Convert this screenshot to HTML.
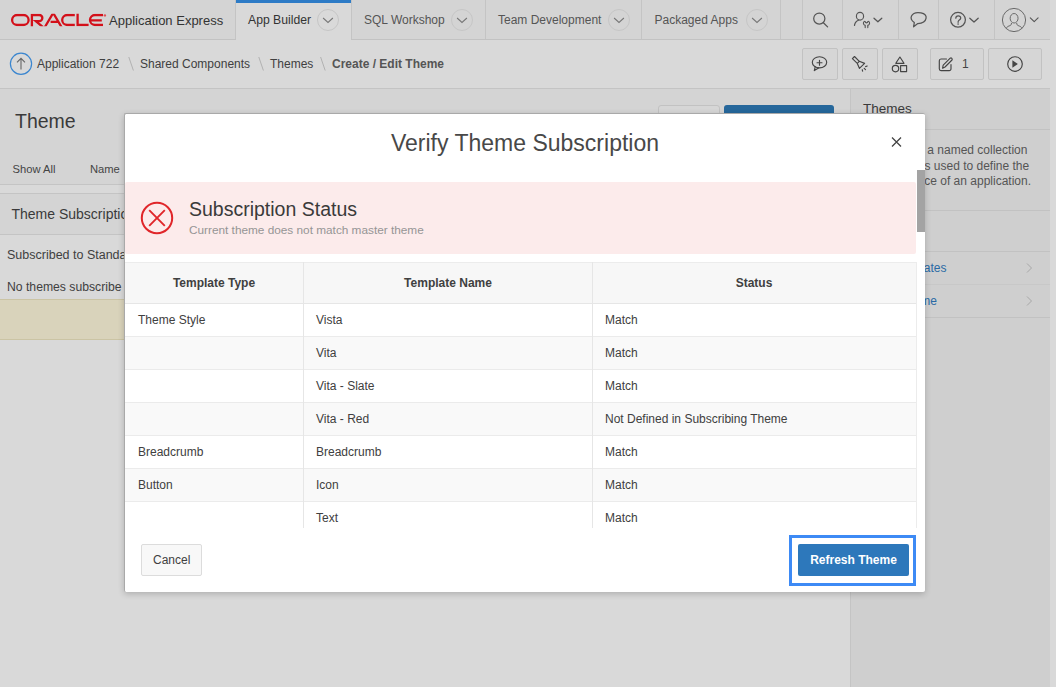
<!DOCTYPE html>
<html><head><meta charset="utf-8"><style>
html,body{margin:0;padding:0;width:1056px;height:687px;overflow:hidden;position:relative;font-family:"Liberation Sans", sans-serif}
.t{position:absolute;line-height:20px;white-space:nowrap}
</style></head><body>
<div style="position:absolute;left:0px;top:0px;width:1056px;height:687px;background:#d9d9d9"></div>
<div style="position:absolute;left:850px;top:88px;width:200px;height:599px;background:#cfcfcf;border-left:1px solid #c4c4c4;box-sizing:border-box"></div>
<div style="position:absolute;left:1050px;top:0px;width:6px;height:687px;background:#d9d9d9"></div>
<div style="position:absolute;left:0px;top:0px;width:1050px;height:40px;background:#d4d4d4;border-bottom:1px solid #c2c2c2;box-sizing:border-box"></div>
<div style="position:absolute;left:236px;top:0px;width:115px;height:40px;background:#d9d9d9"></div>
<div style="position:absolute;left:236px;top:0px;width:115px;height:3px;background:#2d7bc6"></div>
<div style="position:absolute;left:235px;top:0px;width:1px;height:39px;background:#c4c4c4"></div>
<div style="position:absolute;left:351px;top:0px;width:1px;height:39px;background:#c4c4c4"></div>
<div style="position:absolute;left:485px;top:0px;width:1px;height:39px;background:#c4c4c4"></div>
<div style="position:absolute;left:641px;top:0px;width:1px;height:39px;background:#c4c4c4"></div>
<div style="position:absolute;left:780px;top:0px;width:1px;height:39px;background:#c4c4c4"></div>
<div style="position:absolute;left:802px;top:0px;width:1px;height:39px;background:#c4c4c4"></div>
<div style="position:absolute;left:842px;top:0px;width:1px;height:39px;background:#c4c4c4"></div>
<div style="position:absolute;left:898px;top:0px;width:1px;height:39px;background:#c4c4c4"></div>
<div style="position:absolute;left:938px;top:0px;width:1px;height:39px;background:#c4c4c4"></div>
<div style="position:absolute;left:994px;top:0px;width:1px;height:39px;background:#c4c4c4"></div>
<svg style="position:absolute;left:0;top:0" width="120" height="40" viewBox="0 0 120 40">
<defs><clipPath id="lc"><rect x="0" y="13.85" width="103.2" height="12.3"/></clipPath></defs>
<g fill="none" stroke="#d3101a" stroke-width="2.3" clip-path="url(#lc)">
<rect x="12.1" y="15" width="16.5" height="10" rx="5"/>
<path d="M31.9,27 V15 H39.3 A3.05,3.05 0 0 1 39.3,21.1 H35.8 L43,27.2"/>
<path d="M44.6,27.5 L53.2,13 L61.8,27.5 M50.6,21.9 H57.8"/>
<path d="M74.8,15 H67.2 A5,5 0 0 0 67.2,25 H74.8"/>
<path d="M77.6,13 V25 H88.6"/>
<path d="M103,15 H95 A5,5 0 0 0 95,25 H103 M90.5,20.3 H101.8"/>
</g><circle cx="104.9" cy="15.4" r="1.2" fill="#dd5055"/></svg>
<div class="t" style="left:109px;top:11.00px;font-size:13px;color:#333;font-weight:400;">Application Express</div>
<div class="t" style="left:248px;top:9.77px;font-size:12.2px;color:#333;font-weight:400;">App Builder</div>
<div class="t" style="left:364px;top:9.84px;font-size:12px;color:#555;font-weight:400;">SQL Workshop</div>
<div class="t" style="left:498px;top:9.84px;font-size:12px;color:#555;font-weight:400;">Team Development</div>
<div class="t" style="left:654.5px;top:9.84px;font-size:12px;color:#555;font-weight:400;">Packaged Apps</div>
<svg style="position:absolute;left:316px;top:7.5px" width="24" height="24" viewBox="0 0 24 24">
<circle cx="12" cy="12" r="10.5" fill="none" stroke="#c6c6c6" stroke-width="1"/>
<path d="M7.1,10 L12,14.5 L16.9,10" fill="none" stroke="#777" stroke-width="1.05"/></svg>
<svg style="position:absolute;left:450px;top:7.5px" width="24" height="24" viewBox="0 0 24 24">
<circle cx="12" cy="12" r="10.5" fill="none" stroke="#c6c6c6" stroke-width="1"/>
<path d="M7.1,10 L12,14.5 L16.9,10" fill="none" stroke="#777" stroke-width="1.05"/></svg>
<svg style="position:absolute;left:607px;top:7.5px" width="24" height="24" viewBox="0 0 24 24">
<circle cx="12" cy="12" r="10.5" fill="none" stroke="#c6c6c6" stroke-width="1"/>
<path d="M7.1,10 L12,14.5 L16.9,10" fill="none" stroke="#777" stroke-width="1.05"/></svg>
<svg style="position:absolute;left:745px;top:7.5px" width="24" height="24" viewBox="0 0 24 24">
<circle cx="12" cy="12" r="10.5" fill="none" stroke="#c6c6c6" stroke-width="1"/>
<path d="M7.1,10 L12,14.5 L16.9,10" fill="none" stroke="#777" stroke-width="1.05"/></svg>
<div style="position:absolute;left:0px;top:40px;width:1050px;height:49px;background:#d9d9d9;border-bottom:1px solid #c4c4c4;box-sizing:border-box"></div>
<div class="t" style="left:37px;top:53.84px;font-size:12px;color:#404040;font-weight:400;">Application 722</div>
<div class="t" style="left:140px;top:53.84px;font-size:12px;color:#404040;font-weight:400;">Shared Components</div>
<div class="t" style="left:270px;top:53.84px;font-size:12px;color:#404040;font-weight:400;">Themes</div>
<div class="t" style="left:332px;top:53.84px;font-size:12px;color:#555;font-weight:700;">Create / Edit Theme</div>
<div style="position:absolute;left:802px;top:48px;width:36px;height:32px;background:#d6d6d6;border:1px solid #c2c2c2;box-sizing:border-box;border-radius:2px"></div>
<div style="position:absolute;left:842px;top:48px;width:36px;height:32px;background:#d6d6d6;border:1px solid #c2c2c2;box-sizing:border-box;border-radius:2px"></div>
<div style="position:absolute;left:882px;top:48px;width:36px;height:32px;background:#d6d6d6;border:1px solid #c2c2c2;box-sizing:border-box;border-radius:2px"></div>
<div style="position:absolute;left:930px;top:48px;width:54px;height:32px;background:#d6d6d6;border:1px solid #c2c2c2;box-sizing:border-box;border-radius:2px"></div>
<div style="position:absolute;left:988px;top:48px;width:54px;height:32px;background:#d6d6d6;border:1px solid #c2c2c2;box-sizing:border-box;border-radius:2px"></div>
<svg style="position:absolute;left:0;top:0" width="1056" height="88" viewBox="0 0 1056 88">
<g fill="none" stroke="#555" stroke-width="1.25" stroke-linecap="round" stroke-linejoin="round">
<circle cx="819.3" cy="18.6" r="5.6"/><path d="M823.4,22.7 L827.6,26.9"/>
<ellipse cx="860" cy="16.2" rx="3.6" ry="3.9" stroke-width="1.15"/>
<path d="M858.4,20.2 C856.2,21.2 854.7,22.8 854.5,25.4"/>
<path d="M864.3,21.4 C863,22.4 863,24.6 865.2,25.4 V27.6 M868.7,21.4 C870,22.4 870,24.6 867.8,25.4 V27.6 M865.2,21.6 C865.5,23.3 867.5,23.3 867.8,21.6" stroke-width="1.15"/>
<path d="M874,18.2 L877.9,21.8 L881.8,18.2"/>
<path d="M914.3,22.6 C911.5,20.6 910.5,18.2 911.5,16 C913,12.8 917.5,12.2 921,12.8 C924.5,13.5 926.5,15.8 926.1,18.2 C925.6,21.2 922.2,23.4 917.8,23.6 L913.6,26.8 Z"/>
<circle cx="958" cy="19.8" r="7.4"/>
<path d="M955.8,18.2 C955.8,16.5 957,15.8 958.3,15.8 C959.8,15.8 960.8,16.8 960.7,18.1 C960.6,19.4 959.4,19.8 958.6,20.6 C958.2,21 958.1,21.5 958.1,22.3"/>
<path d="M969.8,18.2 L974,22 L978.2,18.2"/>
<path d="M1030.3,17.9 L1034.2,21.6 L1038.1,17.9" stroke-width="1.1"/>
</g>
<circle cx="958.1" cy="24.1" r="0.8" fill="#555"/>
<g fill="none" stroke="#6a6a6a" stroke-width="1">
<circle cx="1014" cy="20" r="11.6"/>
<ellipse cx="1014.1" cy="18.25" rx="3.95" ry="4.75"/>
<path d="M1011.5,23 C1011.5,24.6 1011,25.4 1009,26 C1007.6,26.4 1006.9,27 1006.3,28.4 M1016.7,23 C1016.7,24.6 1017.2,25.4 1019.2,26 C1020.6,26.4 1021.3,27 1021.9,28.4"/>
</g>
<g fill="none" stroke="#444" stroke-width="1.15" stroke-linecap="round" stroke-linejoin="round">
<ellipse cx="819.5" cy="62.3" rx="7.2" ry="5.6"/>
<path d="M815.2,66.8 L814.3,70.6 L818.6,67.9"/>
<path d="M819.5,60.2 V65.2 M817,62.7 H822"/>
<path d="M852.4,58.6 L854.5,56.5 L859.3,61.3 L864.6,63.4 L859.4,68.3 L857.3,63.4 Z M857.3,63.4 L859.3,61.3"/>
<path d="M865.6,66.6 L867.2,66 M864.2,68.3 L865.5,69.6 M862.2,69.7 L862.6,71.2"/>
<path d="M899.9,57 L904,63.3 H895.8 Z"/>
<circle cx="895.5" cy="68.6" r="3.2"/>
<rect x="900.6" y="65.6" width="6" height="6"/>
<path d="M946.5,59 H941 A1.8,1.8 0 0 0 939.3,60.8 V68.8 A1.8,1.8 0 0 0 941,70.6 H949.2 A1.8,1.8 0 0 0 951,68.8 V64.5"/>
<path d="M942.6,68.2 L943.2,65.2 L950.2,58.2 A1.3,1.3 0 0 1 952,60 L945,67 Z"/>
<circle cx="1015" cy="64" r="7.3"/>
</g>
<path d="M1012.4,60.3 L1017.9,64 L1012.4,67.7 Z" fill="#444"/>
<g fill="none" stroke="#3b86cf" stroke-width="1.2"><circle cx="21" cy="63.8" r="10.6"/></g>
<path d="M21,69.5 V58.3 M17,62.3 L21,58.3 L25,62.3" fill="none" stroke="#666" stroke-width="1.1"/>
<path d="M128.8,57 L133.4,70.5 M258.8,57 L263.4,70.5 M320.6,57 L325.2,70.5" fill="none" stroke="#adadad" stroke-width="0.9"/>
</svg>
<div class="t" style="left:962px;top:53.84px;font-size:12px;color:#444;font-weight:400;">1</div>
<div style="position:absolute;left:0px;top:89px;width:850px;height:96px;background:#d4d4d4;border-bottom:1px solid #c4c4c4;box-sizing:border-box"></div>
<div class="t" style="left:15px;top:111.24px;font-size:19.5px;color:#3a3a3a;font-weight:400;">Theme</div>
<div class="t" style="left:12.5px;top:159.32px;font-size:11.2px;color:#444;font-weight:400;">Show All</div>
<div class="t" style="left:90px;top:159.32px;font-size:11.2px;color:#444;font-weight:400;">Name</div>
<div style="position:absolute;left:658px;top:105px;width:62px;height:32px;background:#d6d6d6;border:1px solid #c2c2c2;box-sizing:border-box;border-radius:3px"></div>
<div style="position:absolute;left:724px;top:105px;width:110px;height:32px;background:#26679b;border-radius:3px"></div>
<div style="position:absolute;left:0px;top:193px;width:850px;height:42px;background:#d4d4d4;border-top:1px solid #c4c4c4;border-bottom:1px solid #c4c4c4;box-sizing:border-box"></div>
<div class="t" style="left:11.5px;top:204.15px;font-size:14px;color:#3a3a3a;font-weight:400;">Theme Subscription</div>
<div class="t" style="left:7px;top:244.67px;font-size:12.5px;color:#404040;font-weight:400;">Subscribed to Standard Theme</div>
<div class="t" style="left:7px;top:276.77px;font-size:12.2px;color:#404040;font-weight:400;">No themes subscribe to this theme</div>
<div style="position:absolute;left:0px;top:299px;width:850px;height:41px;background:#d9d3bb;border-top:1px solid #cbc4a4;border-bottom:1px solid #cbc4a4;box-sizing:border-box"></div>
<div class="t" style="left:863px;top:98.82px;font-size:13.5px;color:#3a3a3a;font-weight:400;">Themes</div>
<div style="position:absolute;left:851px;top:129px;width:199px;height:1px;background:#c2c2c2"></div>
<div class="t" style="left:863px;top:139.84px;font-size:12px;color:#555;font-weight:400;width:170px;text-align:right;left:857.4px">A theme is a named collection</div>
<div class="t" style="left:863px;top:155.54px;font-size:12px;color:#555;font-weight:400;width:170px;text-align:right;left:859.2px">of templates used to define the</div>
<div class="t" style="left:863px;top:171.44px;font-size:12px;color:#555;font-weight:400;width:170px;text-align:right;left:861px">user interface of an application.</div>
<div style="position:absolute;left:851px;top:210px;width:199px;height:1px;background:#c2c2c2"></div>
<div style="position:absolute;left:851px;top:251px;width:199px;height:1px;background:#c2c2c2"></div>
<div class="t" style="left:863px;top:257.84px;font-size:12px;color:#2a6aa5;font-weight:400;width:100px;text-align:right;left:846.5px">Update Templates</div>
<div style="position:absolute;left:851px;top:284px;width:199px;height:1px;background:#c8c8c8"></div>
<div class="t" style="left:863px;top:290.84px;font-size:12px;color:#2a6aa5;font-weight:400;width:75px;text-align:right;left:862px">Copy Theme</div>
<div style="position:absolute;left:851px;top:317px;width:199px;height:1px;background:#c2c2c2"></div>
<svg style="position:absolute;left:1024px;top:261.5px" width="10" height="12" viewBox="0 0 10 12"><path d="M3,1.5 L7.5,6 L3,10.5" fill="none" stroke="#a8a8a8" stroke-width="1"/></svg>
<svg style="position:absolute;left:1024px;top:294.5px" width="10" height="12" viewBox="0 0 10 12"><path d="M3,1.5 L7.5,6 L3,10.5" fill="none" stroke="#a8a8a8" stroke-width="1"/></svg>
<div style="position:absolute;left:124px;top:113px;width:801px;height:479px;background:#fff;border-top:1px solid #a9a9a9;border-left:1px solid #a9a9a9;box-sizing:border-box;border-radius:2px;box-shadow:0 2px 6px rgba(0,0,0,0.2)"></div>
<div class="t" style="left:275.0px;width:500px;text-align:center;top:133.33px;font-size:23px;color:#484848;font-weight:400;">Verify Theme Subscription</div>
<svg style="position:absolute;left:889px;top:135px" width="14" height="14" viewBox="0 0 14 14"><path d="M3,2.5 L12,11.5 M12,2.5 L3,11.5" stroke="#444" stroke-width="1.3"/></svg>
<div style="position:absolute;left:125px;top:182px;width:791px;height:72px;background:#fcebeb;border-radius:2px"></div>
<svg style="position:absolute;left:140px;top:201px" width="34" height="34" viewBox="0 0 34 34">
<circle cx="17" cy="17" r="15.2" fill="none" stroke="#e0262a" stroke-width="2"/>
<path d="M9.2,9.2 L24.8,24.8 M24.8,9.2 L9.2,24.8" stroke="#e0262a" stroke-width="1.9"/></svg>
<div class="t" style="left:189px;top:198.74px;font-size:19.5px;color:#3a3a3a;font-weight:400;">Subscription Status</div>
<div class="t" style="left:189px;top:220.11px;font-size:11.8px;color:#959595;font-weight:400;">Current theme does not match master theme</div>
<div style="position:absolute;left:125px;top:262px;width:791px;height:42px;background:#f7f7f7;border-top:1px solid #ececec;border-bottom:1px solid #e6e6e6;box-sizing:border-box"></div>
<div class="t" style="left:114.0px;width:200px;text-align:center;top:272.84px;font-size:12px;color:#404040;font-weight:700;">Template Type</div>
<div class="t" style="left:298.0px;width:300px;text-align:center;top:272.84px;font-size:12px;color:#404040;font-weight:700;">Template Name</div>
<div class="t" style="left:604.0px;width:300px;text-align:center;top:272.84px;font-size:12px;color:#404040;font-weight:700;">Status</div>
<div style="position:absolute;left:125px;top:304px;width:791px;height:33px;background:#ffffff;border-bottom:1px solid #ebebeb;box-sizing:border-box"></div>
<div class="t" style="left:138px;top:309.84px;font-size:12px;color:#404040;font-weight:400;">Theme Style</div>
<div class="t" style="left:316px;top:309.84px;font-size:12px;color:#404040;font-weight:400;">Vista</div>
<div class="t" style="left:605px;top:309.84px;font-size:12px;color:#404040;font-weight:400;">Match</div>
<div style="position:absolute;left:125px;top:337px;width:791px;height:33px;background:#f9f9f9;border-bottom:1px solid #ebebeb;box-sizing:border-box"></div>
<div class="t" style="left:138px;top:342.84px;font-size:12px;color:#404040;font-weight:400;"></div>
<div class="t" style="left:316px;top:342.84px;font-size:12px;color:#404040;font-weight:400;">Vita</div>
<div class="t" style="left:605px;top:342.84px;font-size:12px;color:#404040;font-weight:400;">Match</div>
<div style="position:absolute;left:125px;top:370px;width:791px;height:33px;background:#ffffff;border-bottom:1px solid #ebebeb;box-sizing:border-box"></div>
<div class="t" style="left:138px;top:375.84px;font-size:12px;color:#404040;font-weight:400;"></div>
<div class="t" style="left:316px;top:375.84px;font-size:12px;color:#404040;font-weight:400;">Vita - Slate</div>
<div class="t" style="left:605px;top:375.84px;font-size:12px;color:#404040;font-weight:400;">Match</div>
<div style="position:absolute;left:125px;top:403px;width:791px;height:33px;background:#f9f9f9;border-bottom:1px solid #ebebeb;box-sizing:border-box"></div>
<div class="t" style="left:138px;top:408.84px;font-size:12px;color:#404040;font-weight:400;"></div>
<div class="t" style="left:316px;top:408.84px;font-size:12px;color:#404040;font-weight:400;">Vita - Red</div>
<div class="t" style="left:605px;top:408.84px;font-size:12px;color:#404040;font-weight:400;">Not Defined in Subscribing Theme</div>
<div style="position:absolute;left:125px;top:436px;width:791px;height:33px;background:#ffffff;border-bottom:1px solid #ebebeb;box-sizing:border-box"></div>
<div class="t" style="left:138px;top:441.84px;font-size:12px;color:#404040;font-weight:400;">Breadcrumb</div>
<div class="t" style="left:316px;top:441.84px;font-size:12px;color:#404040;font-weight:400;">Breadcrumb</div>
<div class="t" style="left:605px;top:441.84px;font-size:12px;color:#404040;font-weight:400;">Match</div>
<div style="position:absolute;left:125px;top:469px;width:791px;height:33px;background:#f9f9f9;border-bottom:1px solid #ebebeb;box-sizing:border-box"></div>
<div class="t" style="left:138px;top:474.84px;font-size:12px;color:#404040;font-weight:400;">Button</div>
<div class="t" style="left:316px;top:474.84px;font-size:12px;color:#404040;font-weight:400;">Icon</div>
<div class="t" style="left:605px;top:474.84px;font-size:12px;color:#404040;font-weight:400;">Match</div>
<div style="position:absolute;left:125px;top:502px;width:791px;height:33px;background:#ffffff;border-bottom:1px solid #ebebeb;box-sizing:border-box"></div>
<div class="t" style="left:138px;top:507.84px;font-size:12px;color:#404040;font-weight:400;"></div>
<div class="t" style="left:316px;top:507.84px;font-size:12px;color:#404040;font-weight:400;">Text</div>
<div class="t" style="left:605px;top:507.84px;font-size:12px;color:#404040;font-weight:400;">Match</div>
<div style="position:absolute;left:125px;top:535px;width:791px;height:33px;background:#f9f9f9;border-bottom:1px solid #ebebeb;box-sizing:border-box"></div>
<div class="t" style="left:138px;top:540.84px;font-size:12px;color:#404040;font-weight:400;"></div>
<div class="t" style="left:316px;top:540.84px;font-size:12px;color:#404040;font-weight:400;"></div>
<div class="t" style="left:605px;top:540.84px;font-size:12px;color:#404040;font-weight:400;"></div>
<div style="position:absolute;left:303px;top:262px;width:1px;height:280px;background:#e6e6e6"></div>
<div style="position:absolute;left:592px;top:262px;width:1px;height:280px;background:#e6e6e6"></div>
<div style="position:absolute;left:916px;top:262px;width:1px;height:280px;background:#ececec"></div>
<div style="position:absolute;left:125px;top:528px;width:800px;height:63px;background:#fff;border-radius:0 0 2px 2px"></div>
<div style="position:absolute;left:917px;top:170px;width:8px;height:62px;background:#a3a3a3"></div>
<div style="position:absolute;left:141px;top:544px;width:61px;height:32px;background:#f8f8f8;border:1px solid #dcdcdc;box-sizing:border-box;border-radius:2px"></div>
<div class="t" style="left:153px;top:549.84px;font-size:12px;color:#404040;font-weight:400;">Cancel</div>
<div style="position:absolute;left:789px;top:535px;width:127px;height:51px;border:3px solid #3d8af5;box-sizing:border-box"></div>
<div style="position:absolute;left:798px;top:544px;width:111px;height:32px;background:#2d78bb;border-radius:2px"></div>
<div class="t" style="left:793.5px;width:120px;text-align:center;top:549.84px;font-size:12px;color:#fff;font-weight:700;">Refresh Theme</div>
</body></html>
